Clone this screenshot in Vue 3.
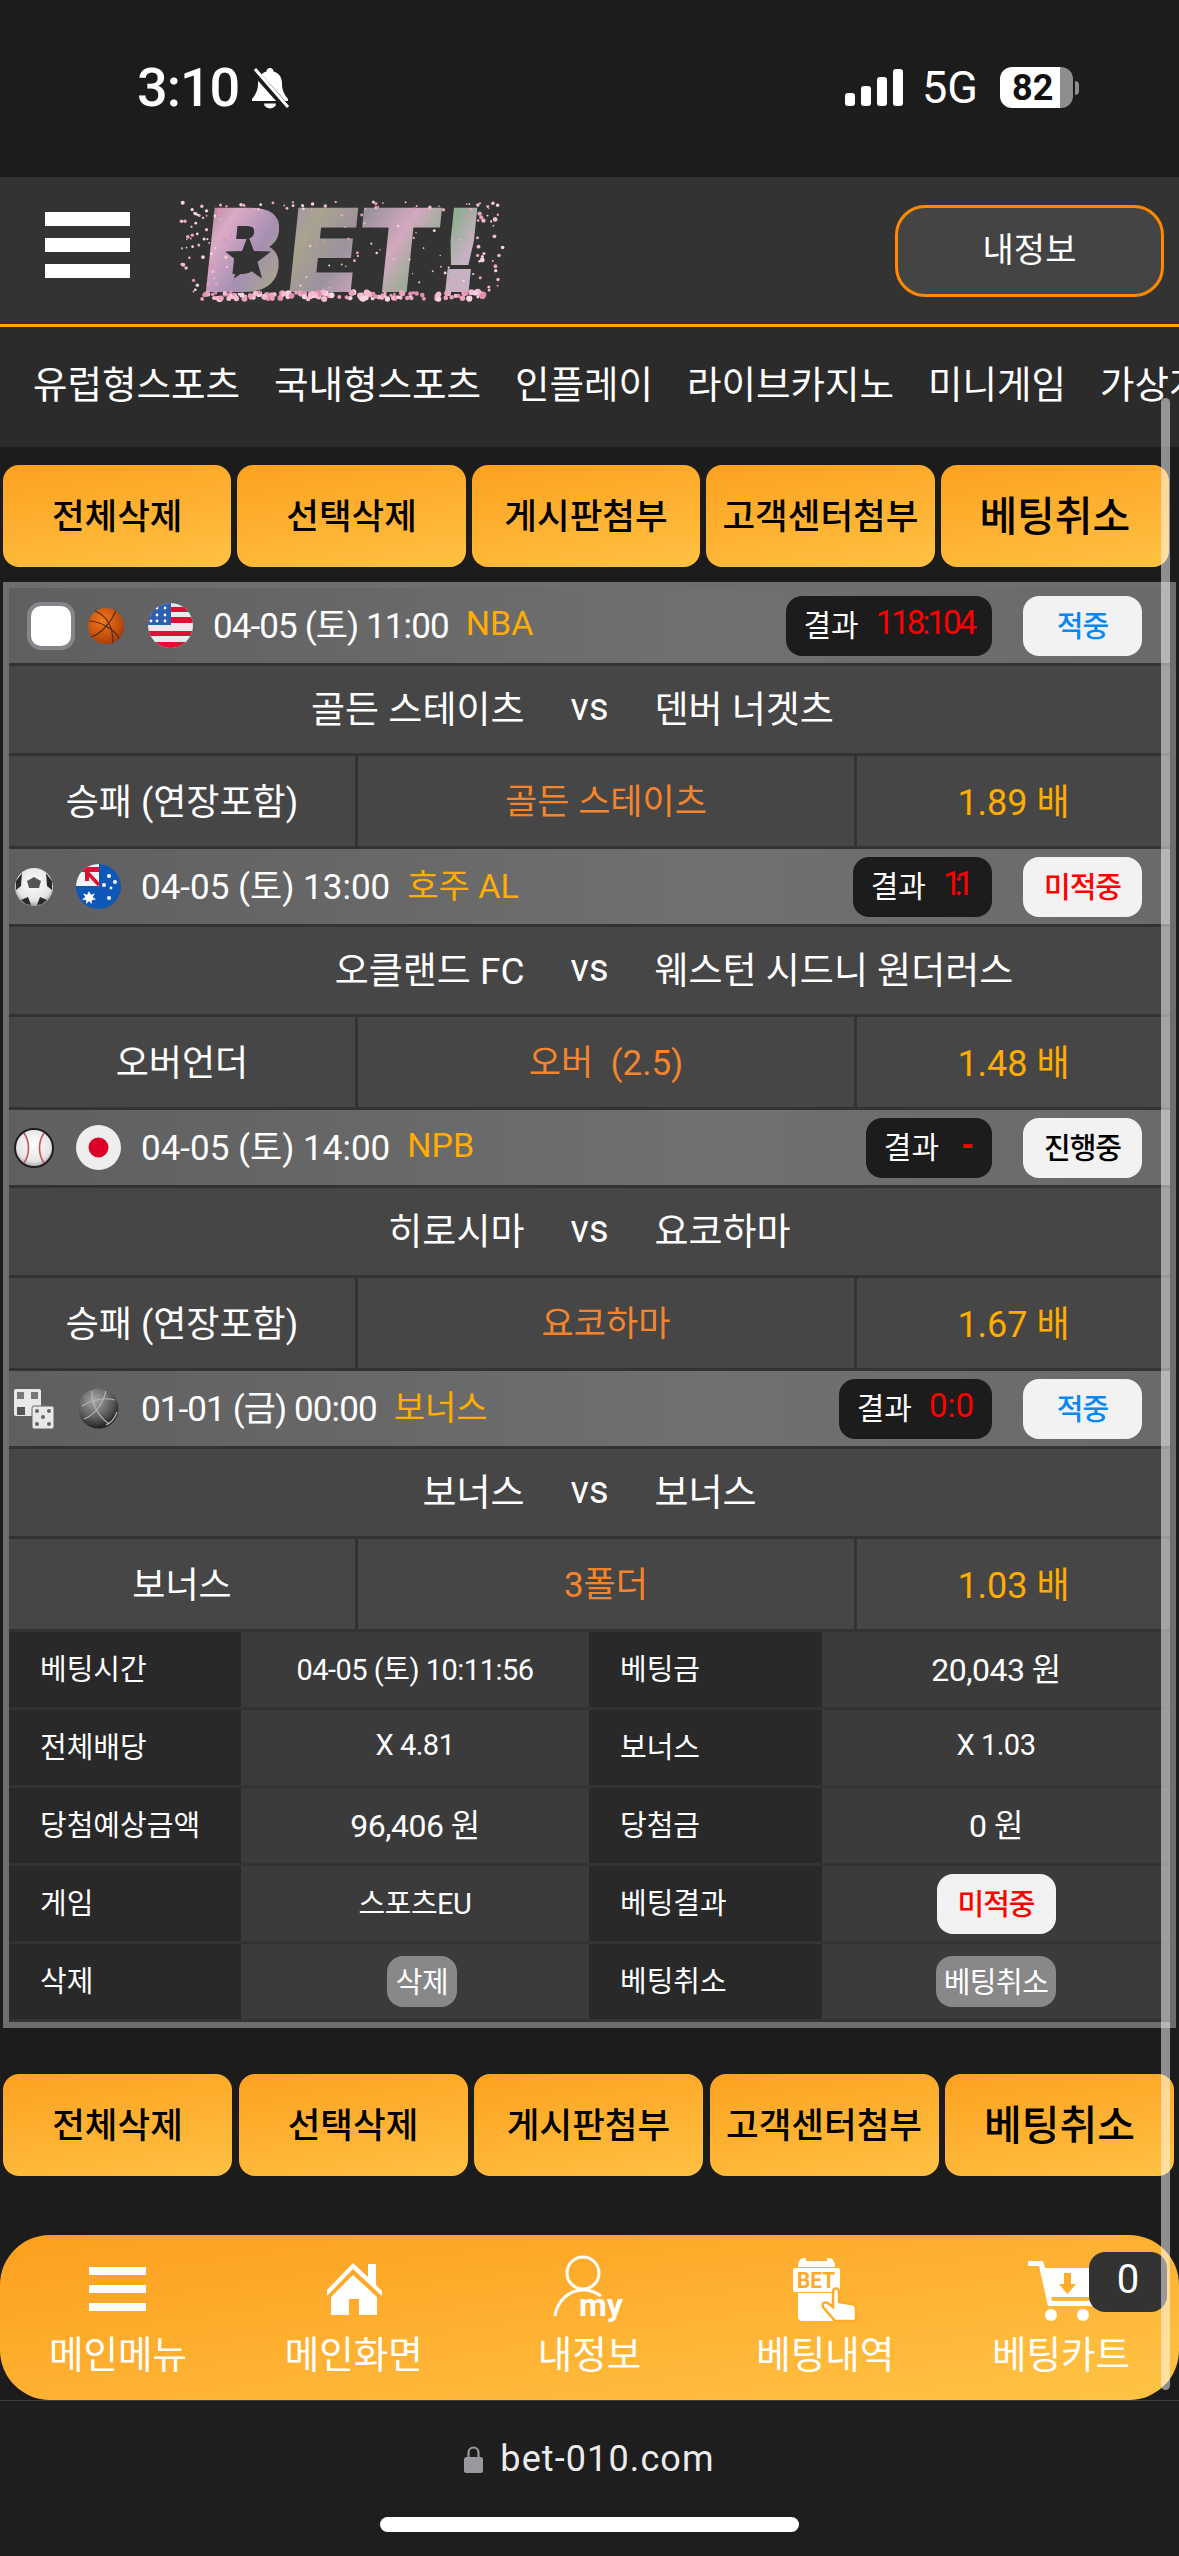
<script setup>
const topButtons = ['전체삭제', '선택삭제', '게시판첨부', '고객센터첨부'];
const navItems = ['유럽형스포츠', '국내형스포츠', '인플레이', '라이브카지노', '미니게임', '가상게임'];

const games = [
  { check: true, sport: 'basket', flag: 'us', date: '04-05 (토) 11:00', dateTone: '', league: 'NBA', score: '118:104', scoreTone: 'score-tight', status: '적중', tone: 'hit', home: '골든 스테이츠', away: '덴버 너겟츠', market: '승패 (연장포함)', pick: '골든 스테이츠', odds: '1.89 배' },
  { check: false, sport: 'soccer', flag: 'au', date: '04-05 (토) 13:00', dateTone: 'date-wide', league: '호주 AL', score: '1:1', scoreTone: 'score-narrow', status: '미적중', tone: 'miss', home: '오클랜드 FC', away: '웨스턴 시드니 원더러스', market: '오버언더', pick: '오버  (2.5)', odds: '1.48 배' },
  { check: false, sport: 'baseball', flag: 'jp', date: '04-05 (토) 14:00', dateTone: 'date-wide', league: 'NPB', score: '-', scoreTone: 'score-dash', status: '진행중', tone: 'live', home: '히로시마', away: '요코하마', market: '승패 (연장포함)', pick: '요코하마', odds: '1.67 배' },
  { check: false, sport: 'dice', flag: 'ball', date: '01-01 (금) 00:00', dateTone: '', league: '보너스', score: '0:0', scoreTone: '', status: '적중', tone: 'hit', home: '보너스', away: '보너스', market: '보너스', pick: '3폴더', odds: '1.03 배' },
];

const info = [
  ['베팅시간', '04-05 (토) 10:11:56', '베팅금', '20,043 원'],
  ['전체배당', 'X 4.81', '보너스', 'X 1.03'],
  ['당첨예상금액', '96,406 원', '당첨금', '0 원'],
];

const navBottom = ['메인메뉴', '메인화면', '내정보', '베팅내역', '베팅카트'];

function seq(seed, n, fn) {
  let s = seed;
  const rnd = () => {
    s = (s * 1664525 + 1013904223) % 4294967296;
    return s / 4294967296;
  };
  return Array.from({ length: n }, () => fn(rnd));
}
const pinks = ['#f3bcd0', '#eaa2bd', '#f8d5e0', '#e48fb0'];
const petals = [
  ...seq(7, 150, (r) => ({ x: 22 + r() * 285, y: 92 + r() * 7, r: 1.4 + r() * 1.8, c: pinks[Math.floor(r() * 4)] })),
  ...seq(11, 55, (r) => ({ x: 2 + r() * 48, y: 2 + r() * 90, r: 0.7 + r() * 1.3, c: pinks[Math.floor(r() * 4)] })),
  ...seq(13, 40, (r) => ({ x: 50 + r() * 270, y: 2 + r() * 8, r: 0.7 + r() * 1.1, c: pinks[Math.floor(r() * 4)] })),
  ...seq(17, 30, (r) => ({ x: 295 + r() * 30, y: 8 + r() * 85, r: 0.8 + r() * 1.6, c: pinks[Math.floor(r() * 4)] })),
  ...seq(19, 45, (r) => ({ x: 120 + r() * 180, y: 15 + r() * 75, r: 0.6 + r() * 1.0, c: pinks[Math.floor(r() * 4)] })),
];
</script>

<template>
  <div class="page">
    <div class="status">
      <div class="status-left">
        <span class="clock">3:10</span>
        <svg class="bell" viewBox="0 0 42 42">
          <path d="M21 1c2 0 3.500 1.500 3.500 3.500C31 6.500 33 11 33 17c0 6 2 10 6 15v2H3v-2c4-5 6-9 6-15 0-6 2-10.500 8.500-12.500C17.500 2.500 19 1 21 1z" fill="#fff" />
          <path d="M15 36.500h12a6 5 0 0 1-12 0z" fill="#fff" />
          <path d="M4 3l34 38" stroke="#1c1c1c" stroke-width="7" />
          <path d="M6 2l33 38" stroke="#fff" stroke-width="3" />
        </svg>
      </div>
      <div class="status-right">
        <div class="signal"><i class="s1"></i><i class="s2"></i><i class="s3"></i><i class="s4"></i></div>
        <span class="fiveg">5G</span>
        <div class="battery"><span class="battery-level">82</span></div>
        <i class="battery-nub"></i>
      </div>
    </div>

    <header class="header">
      <div class="burger"><i></i><i></i><i></i></div>
      <svg class="logo" viewBox="0 -20 327 141">
        <defs>
          <linearGradient id="logoFill" x1="0" y1="0" x2="1" y2="0.25">
            <stop offset="0" stop-color="#8d7d88" />
            <stop offset="0.14" stop-color="#dcabc6" />
            <stop offset="0.3" stop-color="#a58fb2" />
            <stop offset="0.42" stop-color="#a9a38f" />
            <stop offset="0.58" stop-color="#9c929e" />
            <stop offset="0.74" stop-color="#d3a9bf" />
            <stop offset="0.88" stop-color="#93ad92" />
            <stop offset="1" stop-color="#c7b2c4" />
          </linearGradient>
        </defs>
        <text class="logo-text" transform="translate(9.500 0) skewX(-6)" x="20" y="90" textLength="284" lengthAdjust="spacingAndGlyphs" fill="url(#logoFill)" stroke="url(#logoFill)" stroke-width="4">BET!</text>
        <polygon points="70,35 75.900,50.900 92.800,51.600 79.500,62.100 84.100,78.400 70,69 55.900,78.400 60.500,62.100 47.200,51.600 64.100,50.900" fill="#333" />
        <circle v-for="(p, i) in petals" :key="i" :cx="p.x" :cy="p.y" :r="p.r" :fill="p.c" />
      </svg>
      <button class="my-btn"><span>내정보</span></button>
    </header>

    <nav class="menu">
      <span v-for="n in navItems" :key="n">{{ n }}</span>
    </nav>

    <div class="actions actions-top">
      <div v-for="b in topButtons" :key="b" class="action">{{ b }}</div>
      <div class="action action-strong">베팅취소</div>
    </div>

    <section class="board">
      <template v-for="(g, idx) in games" :key="idx">
        <div class="game-head" :class="{ 'with-check': g.check }">
          <i v-if="g.check" class="check"></i>

          <svg class="sport" viewBox="0 0 40 40">
            <defs>
              <radialGradient id="bOrange" cx="0.4" cy="0.35" r="0.7">
                <stop offset="0" stop-color="#f47a1c" />
                <stop offset="1" stop-color="#a83a08" />
              </radialGradient>
              <radialGradient id="wBall" cx="0.5" cy="0.4" r="0.65">
                <stop offset="0" stop-color="#fff" />
                <stop offset="0.7" stop-color="#e4e4e4" />
                <stop offset="1" stop-color="#8c8c8c" />
              </radialGradient>
            </defs>
            <g v-if="g.sport === 'basket'">
              <circle cx="20" cy="20" r="18" fill="url(#bOrange)" />
              <path d="M3 15C14 15 30 24 33 33M9 5c10 4 18 14 18 32M30 5C26 14 16 28 5 31" fill="none" stroke="#5e2a0c" stroke-width="1.200" />
            </g>
            <g v-else-if="g.sport === 'soccer'">
              <circle cx="20" cy="20" r="19" fill="url(#wBall)" />
              <polygon points="20,10 27,14 25,21 15,21 13,14" fill="#555" />
              <path d="M32 6l6 8v9l-5-4zM8 6L2 14v9l5-4zM7 33l7-3 3 8-5-1zM33 33l-7-3-3 8 5-1z" fill="#2a2a2a" />
            </g>
            <g v-else-if="g.sport === 'baseball'">
              <circle cx="20" cy="20" r="19" fill="url(#wBall)" stroke="#1f1f1f" stroke-width="2" />
              <path d="M10 5c6 9 6 21 0 30M30 5c-6 9-6 21 0 30" fill="none" stroke="#c9545a" stroke-width="1.600" />
            </g>
            <g v-else fill="#e8e8e8">
              <rect x="0" y="0" width="27" height="27" rx="2" />
              <rect x="3" y="3" width="7" height="7" fill="#777" />
              <rect x="17" y="3" width="7" height="7" fill="#777" />
              <rect x="3" y="18" width="8" height="8" fill="#555" />
              <rect x="18" y="17" width="22" height="23" rx="2" stroke="#666" />
              <circle cx="23" cy="22" r="2" fill="#666" /><circle cx="35" cy="22" r="2" fill="#666" />
              <circle cx="29" cy="28" r="2" fill="#666" />
              <circle cx="23" cy="35" r="2" fill="#666" /><circle cx="35" cy="35" r="2" fill="#666" />
            </g>
          </svg>

          <svg class="flag" viewBox="0 0 45 45">
            <defs>
              <clipPath id="flagClip"><circle cx="22.500" cy="22.500" r="22.500" /></clipPath>
              <radialGradient id="gBall" cx="0.4" cy="0.3" r="0.75">
                <stop offset="0" stop-color="#a8a8a8" />
                <stop offset="0.6" stop-color="#5a5a5a" />
                <stop offset="1" stop-color="#161616" />
              </radialGradient>
            </defs>
            <g v-if="g.flag === 'us'" clip-path="url(#flagClip)">
              <rect width="45" height="45" fill="#e9e9ee" />
              <rect y="4" width="45" height="5" fill="#dc1133" />
              <rect y="14" width="45" height="6" fill="#dc1133" />
              <rect y="28" width="45" height="5" fill="#dc1133" />
              <rect y="39" width="45" height="6" fill="#dc1133" />
              <rect width="23" height="22" fill="#2f5fb0" />
              <g fill="#fff"><circle cx="9" cy="5" r="1.400" /><circle cx="17" cy="5" r="1.400" /><circle cx="9" cy="12" r="1.400" /><circle cx="17" cy="12" r="1.400" /><circle cx="3" cy="18" r="1.400" /><circle cx="9" cy="18" r="1.400" /><circle cx="17" cy="18" r="1.400" /></g>
            </g>
            <g v-else-if="g.flag === 'au'" clip-path="url(#flagClip)">
              <rect width="45" height="45" fill="#0f58b8" />
              <rect width="23" height="22" fill="#f4f4f4" />
              <path d="M0 8h23v5H13v9H9V13H0z" fill="#dc1133" transform="translate(0 -5)" />
              <path d="M10 7l13 14" stroke="#dc1133" stroke-width="3.500" />
              <g fill="#fff">
                <polygon points="13,27 14.800,30.800 18.800,29.500 16.700,33 20,35.500 16,36 15.500,40 13,37 10.500,40 10,36 6,35.500 9.300,33 7.200,29.500 11.200,30.800" />
                <circle cx="33" cy="12" r="2" /><circle cx="28" cy="21" r="2" /><circle cx="39" cy="18" r="2" /><circle cx="35" cy="24" r="1.400" /><circle cx="33" cy="34" r="2" />
              </g>
            </g>
            <g v-else-if="g.flag === 'jp'">
              <circle cx="22.500" cy="22.500" r="22.500" fill="#eeeeee" />
              <circle cx="22.500" cy="22.500" r="10" fill="#dc0028" />
            </g>
            <g v-else>
              <circle cx="22.500" cy="22.500" r="20" fill="url(#gBall)" />
              <path d="M6 20c10-6 22-9 33-6M16 5c-1 12 6 25 17 33M30 5C27 17 19 29 8 33M41 26c-2 6-6 11-11 13" fill="none" stroke="#b4b4b4" stroke-width="1.200" />
            </g>
          </svg>

          <span class="date" :class="g.dateTone">{{ g.date }}</span>
          <span class="league">{{ g.league }}</span>

          <div class="result"><span class="result-label">결과</span><span class="score" :class="g.scoreTone">{{ g.score }}</span></div>
          <div class="badge" :class="g.tone">{{ g.status }}</div>
        </div>

        <div class="teams">
          <span class="team-home">{{ g.home }}</span>
          <span class="vs">vs</span>
          <span class="team-away">{{ g.away }}</span>
        </div>

        <div class="bet">
          <div class="cell market">{{ g.market }}</div>
          <div class="cell pick">{{ g.pick }}</div>
          <div class="cell odds">{{ g.odds }}</div>
        </div>
      </template>

      <div v-for="row in info" :key="row[0]" class="info">
        <div class="label">{{ row[0] }}</div>
        <div class="value" :class="{ money: row[1].includes('원') }">{{ row[1] }}</div>
        <div class="label">{{ row[2] }}</div>
        <div class="value" :class="{ money: row[3].includes('원') }">{{ row[3] }}</div>
      </div>
      <div class="info">
        <div class="label">게임</div>
        <div class="value">스포츠EU</div>
        <div class="label">베팅결과</div>
        <div class="value value-btn"><span class="badge miss">미적중</span></div>
      </div>
      <div class="info">
        <div class="label">삭제</div>
        <div class="value value-btn"><span class="gray-btn gray-shift">삭제</span></div>
        <div class="label">베팅취소</div>
        <div class="value value-btn"><span class="gray-btn">베팅취소</span></div>
      </div>
    </section>

    <div class="actions actions-bottom">
      <div v-for="b in topButtons" :key="b" class="action">{{ b }}</div>
      <div class="action action-strong">베팅취소</div>
    </div>

    <nav class="tabbar">
      <div v-for="(label, i) in navBottom" :key="label" class="tab">
        <svg class="tab-icon" viewBox="0 0 80 70" fill="#fff">
          <g v-if="i === 0">
            <rect x="11" y="12" width="57" height="8" />
            <rect x="11" y="30" width="57" height="8" />
            <rect x="11" y="48" width="57" height="8" />
          </g>
          <g v-else-if="i === 1">
            <path d="M13 35L39 8l15 14V9h8v21l6 6v5L39 14 13 41z" />
            <path d="M39 20l24 22v18H45V44H35v16H17V42z" />
          </g>
          <g v-else-if="i === 2">
            <circle cx="34" cy="18" r="16" fill="none" stroke="#fff" stroke-width="3" />
            <path d="M6 61c2-15 14-26 28-26 8 0 14 3 18 6" fill="none" stroke="#fff" stroke-width="3" />
            <text class="my-text" x="30" y="61" textLength="44" lengthAdjust="spacingAndGlyphs">my</text>
          </g>
          <g v-else-if="i === 3">
            <path d="M13 12c0-5 2-9 6-9h2v3h21V3h2c4 0 6 4 6 9z" />
            <rect x="8" y="13" width="47" height="24" rx="2" />
            <text class="bet-text" x="12" y="33" textLength="38" lengthAdjust="spacingAndGlyphs">BET</text>
            <path d="M13 38h37v28H17c-2 0-4-2-4-4z" />
            <path d="M48 38c0-6 6-6 6 0v9l12 2c3 0 5 2 5 5v12H50L38 52c-2-4 3-6 6-3l4 3z" fill="#fff" stroke="#fdaa28" stroke-width="2.500" />
          </g>
          <g v-else>
            <path d="M7 6h15l2 7h56v29H30l1 4h49v5H27L18 11H7z" />
            <path d="M43 18h7v11h5l-8.500 10L38 29h5z" fill="#fdac2d" />
            <circle cx="30" cy="60" r="6" /><circle cx="62" cy="60" r="6" />
          </g>
        </svg>
        <span class="tab-label">{{ label }}</span>
      </div>
      <div class="cart-count">0</div>
    </nav>

    <footer class="browser">
      <div class="url">
        <svg class="lock" viewBox="0 0 19 27">
          <path d="M4.500 13V6.500a5 5 0 0 1 10 0V13" fill="none" stroke="#98989e" stroke-width="2.200" />
          <rect x="0" y="11" width="19" height="16" rx="2.500" fill="#98989e" />
        </svg>
        <span>bet-010.com</span>
      </div>
      <i class="home-bar"></i>
    </footer>

    <i class="scrollbar"></i>
  </div>
</template>

<style>
html, body { margin: 0; background: #1e1e1e; }
</style>

<style scoped>
.page {
  position: relative;
  width: 1179px;
  height: 2556px;
  overflow: hidden;
  display: flex;
  flex-direction: column;
  background: #1c1c1c;
  color: #fff;
  font-family: Roboto, "Noto Sans CJK KR", sans-serif;
}
i { display: block; }

/* status bar */
.status {
  height: 177px;
  flex: none;
  display: flex;
  align-items: center;
  justify-content: space-between;
  padding: 0 100px 2px 137px;
  box-sizing: border-box;
}
.status-left { display: flex; align-items: center; gap: 12px; }
.clock { font-size: 54px; font-weight: 500; line-height: 1; width: 100px; letter-spacing: -1px; }
.bell { width: 42px; height: 42px; }
.status-right { display: flex; align-items: center; }
.signal { display: flex; align-items: flex-end; gap: 6px; height: 37px; }
.signal i { width: 10px; background: #fff; border-radius: 3px; }
.s1 { height: 13px; }
.s2 { height: 20px; }
.s3 { height: 29px; }
.s4 { height: 37px; }
.fiveg { font-size: 45px; margin-left: 19px; width: 56px; font-weight: 400; line-height: 1; }
.battery {
  margin-left: 22px;
  width: 73px;
  height: 41px;
  border-radius: 12px;
  background: linear-gradient(90deg, #fff 0 82%, #8e8e8e 82%);
  display: flex;
  align-items: center;
  padding-left: 12px;
  box-sizing: border-box;
}
.battery-level { color: #111; font-size: 36px; font-weight: 700; line-height: 1; }
.battery-nub { width: 4px; height: 14px; margin-left: 2px; background: #8e8e8e; border-radius: 0 4px 4px 0; }

/* header */
.header {
  height: 147px;
  flex: none;
  box-sizing: border-box;
  display: flex;
  align-items: center;
  padding: 0 15px 0 45px;
  background: #333;
}
.burger { width: 85px; display: flex; flex-direction: column; gap: 12px; margin-bottom: 12px; }
.burger i { height: 14px; background: #fff; }
.logo { width: 327px; height: 141px; margin-left: 48px; }
.logo-text { font-family: "DejaVu Sans", sans-serif; font-weight: 700; font-size: 110px; }
.my-btn {
  margin-left: auto;
  width: 269px;
  height: 92px;
  border: 3px solid #ff8a00;
  border-radius: 30px;
  background: #444;
  color: #fff;
  font: 400 34px "Noto Sans CJK KR", sans-serif;
  padding: 0 0 6px;
}

.menu {
  flex: none;
  height: 120px;
  box-sizing: border-box;
  display: flex;
  align-items: center;
  gap: 34px;
  padding: 0 0 12px 33px;
  background: #2b2b2b;
  box-shadow: 0 -3px 0 #ffaa00;
  margin-top: 3px;
  overflow: hidden;
  white-space: nowrap;
  font: 400 37.500px "Noto Sans CJK KR", sans-serif;
}
.menu span { flex: none; }

/* action buttons */
.actions { flex: none; display: flex; height: 102px; color: #000; }
.actions-top { margin-top: 18px; padding: 0 10px 0 3px; gap: 6px; }
.actions-bottom { margin-top: 46px; padding: 0 5px 0 3px; gap: 6.500px; }
.action {
  flex: 1 1 0;
  display: flex;
  align-items: center;
  justify-content: center;
  padding-bottom: 6px;
  box-sizing: border-box;
  border-radius: 16px;
  background: linear-gradient(170deg, #fda120, #ffc142);
  font: 500 35.500px "Noto Sans CJK KR", sans-serif;
  white-space: nowrap;
}
.action-strong { font-size: 41px; }

/* board */
.board {
  flex: none;
  margin: 15px 3px 0;
  border: 6px solid #6e6e6e;
  background: #333;
  display: grid;
  gap: 3px;
  padding-bottom: 3px;
}
.game-head {
  height: 75px;
  display: flex;
  align-items: center;
  padding: 0 28px 0 5px;
  background: linear-gradient(90deg, #5f5f5f, #707070 60%, #6a6a6a);
}
.game-head.with-check { padding-left: 18px; }
.check {
  width: 48px;
  height: 48px;
  flex: none;
  box-sizing: border-box;
  border: 4px solid #85858c;
  border-radius: 14px;
  background: #fff;
  margin-right: 11px;
}
.sport { width: 40px; height: 40px; flex: none; }
.flag { width: 45px; height: 45px; flex: none; margin-left: 22px; }
.date { margin-left: 20px; margin-bottom: 6px; font-size: 35px; letter-spacing: -0.900px; white-space: pre; }
.date-wide { letter-spacing: 0; }
.league { margin-left: 17px; margin-bottom: 6px; font-size: 34px; color: #ffad00; white-space: nowrap; }
.result {
  margin-left: auto;
  height: 60px;
  padding: 0 18px 6px;
  box-sizing: border-box;
  display: flex;
  align-items: center;
  gap: 17px;
  border-radius: 16px;
  background: #1c1c1c;
}
.result-label { font-size: 30px; white-space: nowrap; }
.score { color: #f00; font-size: 33px; min-width: 18px; text-align: right; white-space: nowrap; }
.score-tight { letter-spacing: -3px; }
.score-narrow { letter-spacing: -7px; padding-right: 7px; }
.score-dash { font-weight: 700; }
.badge {
  display: inline-flex;
  align-items: center;
  justify-content: center;
  width: 119px;
  height: 60px;
  padding-bottom: 4px;
  box-sizing: border-box;
  border-radius: 16px;
  background: #f2f2f2;
  font-size: 29px;
  font-weight: 500;
  white-space: nowrap;
  letter-spacing: -1px;
}
.game-head .badge { margin-left: 31px; flex: none; }
.hit { color: #0a88f0; }
.miss { color: #f00; }
.live { color: #000; }

.teams {
  height: 87px;
  padding-bottom: 5px;
  box-sizing: border-box;
  display: grid;
  grid-template-columns: 1fr auto 1fr;
  column-gap: 45px;
  align-items: center;
  background: #464646;
  font-size: 37px;
  white-space: nowrap;
}
.team-home { text-align: right; }
.team-away { text-align: left; }
.vs { font-size: 38px; width: 40px; text-align: center; letter-spacing: 0; }

.bet {
  height: 90px;
  display: grid;
  grid-template-columns: 346px 496px 1fr;
  gap: 3px;
  font-size: 36px;
}
.cell {
  display: flex;
  align-items: center;
  justify-content: center;
  padding-bottom: 5px;
  box-sizing: border-box;
  background: #464646;
  white-space: pre;
}
.pick { color: #f5842c; font-size: 35px; }
.odds { color: #ffad00; }

.info {
  height: 75px;
  display: grid;
  grid-template-columns: 232px 348px 233px 1fr;
  font-size: 29px;
}
.label, .value { display: flex; align-items: center; padding-bottom: 5px; box-sizing: border-box; }
.label { padding-left: 31px; background: #292929; white-space: nowrap; }
.value { justify-content: center; background: #3b3b3b; letter-spacing: -0.500px; white-space: nowrap; }
.money { font-size: 32px; }
.value-btn { padding-bottom: 0; }
.gray-btn {
  display: inline-flex;
  align-items: center;
  height: 51px;
  padding: 0 8px 4px;
  box-sizing: border-box;
  border-radius: 16px;
  background: #888;
  color: #fff;
}
.gray-shift { margin-left: 14px; padding-left: 9px; padding-right: 9px; }

/* tab bar */
.tabbar {
  position: relative;
  flex: none;
  margin-top: 59px;
  height: 165px;
  display: grid;
  grid-template-columns: repeat(5, 1fr);
  border-radius: 50px;
  background: linear-gradient(172deg, #fd9f1f, #ffc344);
}
.tab { display: flex; flex-direction: column; align-items: center; padding-top: 20px; }
.tab-icon { width: 80px; height: 70px; overflow: visible; }
.tab-label { margin-top: 7px; font: 400 37.500px/40px "Noto Sans CJK KR", sans-serif; white-space: nowrap; }
.my-text { font: 700 31px Roboto, sans-serif; fill: #fff; }
.bet-text { font: 700 22px Roboto, sans-serif; fill: #fdaa28; }
.cart-count {
  position: absolute;
  top: 17px;
  right: 12px;
  width: 78px;
  height: 60px;
  padding-bottom: 6px;
  box-sizing: border-box;
  border-radius: 16px;
  background: #333;
  display: flex;
  align-items: center;
  justify-content: center;
  font-size: 40px;
  font-weight: 400;
}

/* browser chrome */
.browser {
  flex: 1;
  min-height: 0;
  display: flex;
  flex-direction: column;
  align-items: center;
  background: #1e1e1e;
  border-top: 1px solid #3c3c3c;
}
.url {
  margin-top: 38px;
  height: 40px;
  display: flex;
  align-items: center;
  gap: 17px;
  font-size: 36px;
  letter-spacing: 1.100px;
  color: #ececec;
}
.lock { width: 19px; height: 27px; }
.home-bar { margin-top: 38px; width: 419px; height: 15px; border-radius: 8px; background: #fff; }

.scrollbar {
  position: absolute;
  top: 398px;
  left: 1161px;
  width: 9px;
  height: 1992px;
  border-radius: 5px;
  background: rgba(255, 255, 255, 0.5);
}
</style>
